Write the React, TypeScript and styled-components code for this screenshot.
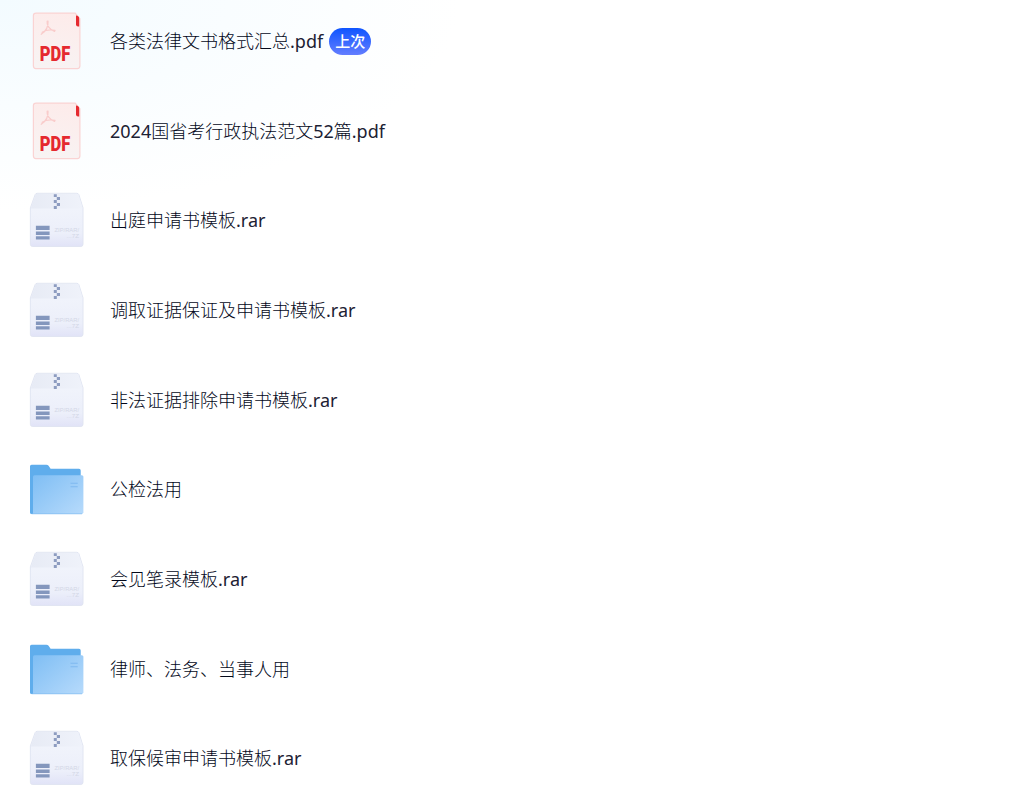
import styled, { createGlobalStyle } from 'styled-components';

type FileKind = 'pdf' | 'rar' | 'folder';

interface FileItem {
  name: string;
  kind: FileKind;
  last?: boolean;
}

const files: FileItem[] = [
  { name: '各类法律文书格式汇总.pdf', kind: 'pdf', last: true },
  { name: '2024国省考行政执法范文52篇.pdf', kind: 'pdf' },
  { name: '出庭申请书模板.rar', kind: 'rar' },
  { name: '调取证据保证及申请书模板.rar', kind: 'rar' },
  { name: '非法证据排除申请书模板.rar', kind: 'rar' },
  { name: '公检法用', kind: 'folder' },
  { name: '会见笔录模板.rar', kind: 'rar' },
  { name: '律师、法务、当事人用', kind: 'folder' },
  { name: '取保候审申请书模板.rar', kind: 'rar' },
];

function PdfIcon() {
  return (
    <Icon viewBox="0 0.2 60 60">
      <path
        d="M8.5 2.3H48.2L52.9 8V55.3Q52.9 57.8 50.4 57.8H8.9Q6.4 57.8 6.4 55.3V4.8Q6.4 2.3 8.9 2.3Z"
        fill="url(#pdfPaper)"
        stroke="#fad3d3"
        strokeWidth="1.2"
      />
      <path d="M49 4.8Q52.2 5 52.2 8V15.8H51Q49 15.6 49 13.5Z" fill="#e5292f" />
      <path
        d="M20.2 10.4C19.4 14.5 22.6 18.6 27.6 20.6M21 10.4C21.4 15.5 18.6 20.6 14.2 23.4M15.2 21.6C18.8 19 23.5 18.6 28 19.6"
        fill="none"
        stroke="#f9cccb"
        strokeWidth="1.3"
        strokeLinecap="round"
      />
      <PdfLabel x="12.7" y="50.7" textLength="30.5" lengthAdjust="spacingAndGlyphs">
        PDF
      </PdfLabel>
    </Icon>
  );
}

function RarIcon() {
  return (
    <Icon viewBox="0 -0.3 60 60">
      <path
        d="M10.2 3H49.8Q51.3 3 51.9 4.4L56 17.5V54Q56 56.2 53.8 56.2H5.6Q3.4 56.2 3.4 54V17.5L8.1 4.4Q8.7 3 10.2 3Z"
        fill="url(#boxFront)"
        stroke="#dfe3f1"
        strokeWidth="0.9"
      />
      <path d="M10.2 3.4H49.8Q51 3.4 51.5 4.6L55.6 18.2H3.8L8.5 4.6Q9 3.4 10.2 3.4Z" fill="url(#boxTop)" />
      {/* zipper */}
      <path
        d="M26.8 4h3v2.8h-3zM29.8 6.8h3.2v3h-3.2zM26.8 9.8h3v3h-3zM29.8 12.8h3.2v3h-3.2zM26.8 15.8h3v3h-3z"
        fill="#8d9cc0"
      />
      <path d="M8.9 35.4h13.7v4.4H8.9zM8.9 41.3h13.7v3.4H8.9zM8.9 46h13.7v3.2H8.9z" fill="#8497bd" />
      <BoxLabel x="27.5" y="42.2" textLength="24.5" lengthAdjust="spacingAndGlyphs">
        ZIP/RAR/
      </BoxLabel>
      <BoxLabel x="39.5" y="48" textLength="12.5" lengthAdjust="spacingAndGlyphs">
        ...7Z
      </BoxLabel>
    </Icon>
  );
}

function FolderIcon() {
  return (
    <Icon viewBox="0 -0.5 60 60">
      <path
        d="M4.6 5.2H19.4Q20.8 5.2 21.6 6.2L23.6 9.2H52Q53.7 9.2 53.7 10.9V54.5H4.6Q3 54.5 3 53V6.8Q3 5.2 4.6 5.2Z"
        fill="#5fadec"
      />
      <path
        d="M7.5 15.8H54.8Q56.4 15.8 56.4 17.3V52.8Q56.4 54.5 54.7 54.5H6V17.3Q6 15.8 7.5 15.8Z"
        fill="url(#folderFront)"
      />
      <path d="M4.6 54.3H55" stroke="#83bdf1" strokeWidth="0.7" />
      <path d="M43.5 23.8h7.2M43.5 27.2h7.2" stroke="#7fb9ef" strokeWidth="1.1" />
    </Icon>
  );
}

const icons = { pdf: PdfIcon, rar: RarIcon, folder: FolderIcon };

// Latin letters and digits are set a bit heavier than the Chinese part
function FileName({ text }: { text: string }) {
  const parts = text.split(/([\w.]+)/).filter(Boolean);
  return (
    <Name>
      {parts.map((part, i) => (/^[\w.]/.test(part) ? <Latin key={i}>{part}</Latin> : part))}
    </Name>
  );
}

export default function App() {
  return (
    <Page>
      <GlobalStyle />
      <Gradients aria-hidden="true">
        <defs>
          <linearGradient id="pdfPaper" x1="0.7" y1="0" x2="0.5" y2="1">
            <stop offset="0" stopColor="#fdebea" />
            <stop offset="1" stopColor="#f8f3f3" />
          </linearGradient>
          <linearGradient id="boxFront" x1="0" y1="0" x2="0" y2="1">
            <stop offset="0.3" stopColor="#f0f3fb" />
            <stop offset="0.75" stopColor="#eceffa" />
            <stop offset="1" stopColor="#e1e3f7" />
          </linearGradient>
          <linearGradient id="boxTop" x1="0" y1="0" x2="1" y2="0">
            <stop offset="0" stopColor="#e7ebf5" />
            <stop offset="1" stopColor="#eff2fa" />
          </linearGradient>
          <linearGradient id="folderFront" x1="0" y1="0" x2="1" y2="0.9">
            <stop offset="0" stopColor="#7fbef4" />
            <stop offset="1" stopColor="#b4d9fb" />
          </linearGradient>
        </defs>
      </Gradients>
      <List>
        {files.map((file) => {
          const FileIcon = icons[file.kind];
          return (
            <Row key={file.name}>
              <FileIcon />
              <FileName text={file.name} />
              {file.last && <Badge>上次</Badge>}
            </Row>
          );
        })}
      </List>
    </Page>
  );
}

// Styled Components
const GlobalStyle = createGlobalStyle`
  body {
    margin: 0;
    background: #fff;
  }
`;

const Page = styled.div`
  height: 800px;
  overflow: hidden;
  font-family: 'Noto Sans', 'Noto Sans CJK SC', sans-serif;
  background: radial-gradient(ellipse 460px 210px at 0 0, #f3fbff 0%, #f9fdff 50%, #fff 100%);
`;

const Gradients = styled.svg`
  display: block;
  width: 0;
  height: 0;
`;

const List = styled.ul`
  list-style: none;
  margin: -4px 0 0;
  padding: 0 27px;
`;

const Row = styled.li`
  display: flex;
  align-items: center;
  height: 89.7px;
`;

const Icon = styled.svg`
  flex: none;
  width: 60px;
  height: 60px;
`;

const Name = styled.span`
  margin-left: 23px;
  font-size: 18px;
  font-weight: 300;
  line-height: 26px;
  color: #03081a;
  white-space: nowrap;
`;

const Latin = styled.span`
  font-weight: 400;
  color: #1c2133;
`;

const Badge = styled.span`
  display: flex;
  align-items: center;
  justify-content: center;
  width: 42px;
  height: 27px;
  margin: 1px 0 0 6px;
  border-radius: 14px;
  background: linear-gradient(180deg, #0f55ff, #637dff);
  color: #fff;
  font-size: 15px;
  font-weight: 500;
  line-height: 27px;
`;

const PdfLabel = styled.text`
  font-family: Roboto, sans-serif;
  font-size: 20.5px;
  font-weight: 900;
  fill: #e5292f;
`;

const BoxLabel = styled.text`
  font-family: 'Liberation Sans', sans-serif;
  font-size: 6px;
  fill: #d3d7e6;
`;
